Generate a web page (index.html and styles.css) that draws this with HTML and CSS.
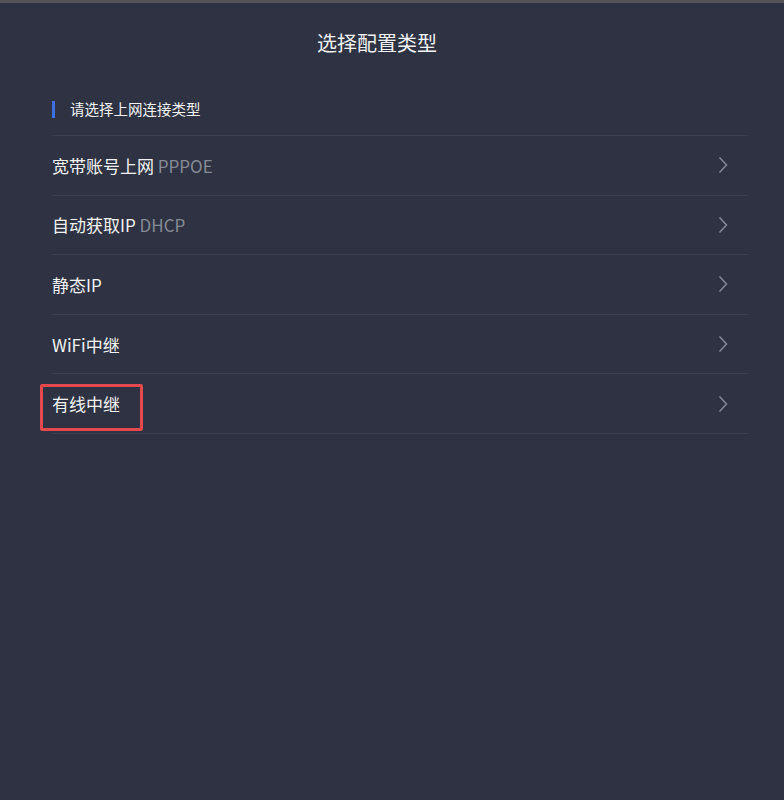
FILE: index.html
```html
<!DOCTYPE html>
<html lang="zh-CN">

    <head>

        <meta charset="UTF-8">
        <meta name="viewport" content="width=device-width, initial-scale=1.0">

        <title>选择配置类型</title>

        <link rel="stylesheet" href="styles.css">

    </head>

    <body>

        <div class="top-strip"></div>

        <header>
            <h1>选择配置类型</h1>
        </header>

        <div class="main-container">

            <div class="section-title">
                <span class="mark"></span>
                <span>请选择上网连接类型</span>
            </div>

            <ul class="type-list">
                <li class="type-item">
                    <span class="label">宽带账号上网 <em>PPPOE</em></span>
                    <svg class="arrow" width="10" height="18" viewBox="0 0 10 18"><polyline points="1.5,1.5 8.5,9 1.5,16.5" /></svg>
                </li>
                <li class="type-item">
                    <span class="label">自动获取IP <em>DHCP</em></span>
                    <svg class="arrow" width="10" height="18" viewBox="0 0 10 18"><polyline points="1.5,1.5 8.5,9 1.5,16.5" /></svg>
                </li>
                <li class="type-item">
                    <span class="label">静态IP</span>
                    <svg class="arrow" width="10" height="18" viewBox="0 0 10 18"><polyline points="1.5,1.5 8.5,9 1.5,16.5" /></svg>
                </li>
                <li class="type-item">
                    <span class="label">WiFi中继</span>
                    <svg class="arrow" width="10" height="18" viewBox="0 0 10 18"><polyline points="1.5,1.5 8.5,9 1.5,16.5" /></svg>
                </li>
                <li class="type-item">
                    <span class="label marked">有线中继</span>
                    <svg class="arrow" width="10" height="18" viewBox="0 0 10 18"><polyline points="1.5,1.5 8.5,9 1.5,16.5" /></svg>
                </li>
            </ul>

        </div>

    </body>

</html>
```

FILE: styles.css
```css
body {
    background-color: #2e3242;
    font-family: "Noto Sans CJK SC", "Noto Sans", sans-serif;
    color: #f2f2f4;
    margin: 0;
    padding: 0;
    min-height: 800px;
}

.top-strip {
    height: 3px;
    background-color: #545454;
}

header {
    text-align: center;
    padding: 26px 30px 0 0;
}

h1 {
    margin: 0;
    font-size: 20px;
    font-weight: normal;
    line-height: 28px;
}

.main-container {
    margin: 42px 36px 0 52px;
}

.section-title {
    display: flex;
    align-items: center;
    gap: 15px;
    font-size: 14.5px;
    line-height: 20px;
    padding-bottom: 16px;
    border-bottom: 1px solid #3b3f4e;
}

.mark {
    display: inline-block;
    width: 3px;
    height: 17px;
    background-color: #3d6fe0;
}

.type-list {
    list-style: none;
    margin: 0;
    padding: 0;
}

.type-item {
    display: flex;
    align-items: center;
    justify-content: space-between;
    height: 58.6px;
    border-bottom: 1px solid #3b3f4e;
    font-size: 17px;
}

.label em {
    font-style: normal;
    color: #868a96;
}

.label.marked {
    position: relative;
}

.label.marked::after {
    content: "";
    position: absolute;
    left: -12px;
    top: -7px;
    width: 97px;
    height: 41px;
    border: 3px solid #e5484d;
    border-radius: 2px;
}

.arrow {
    margin-right: 20px;
    fill: none;
    stroke: #858996;
    stroke-width: 1.5;
}
```
